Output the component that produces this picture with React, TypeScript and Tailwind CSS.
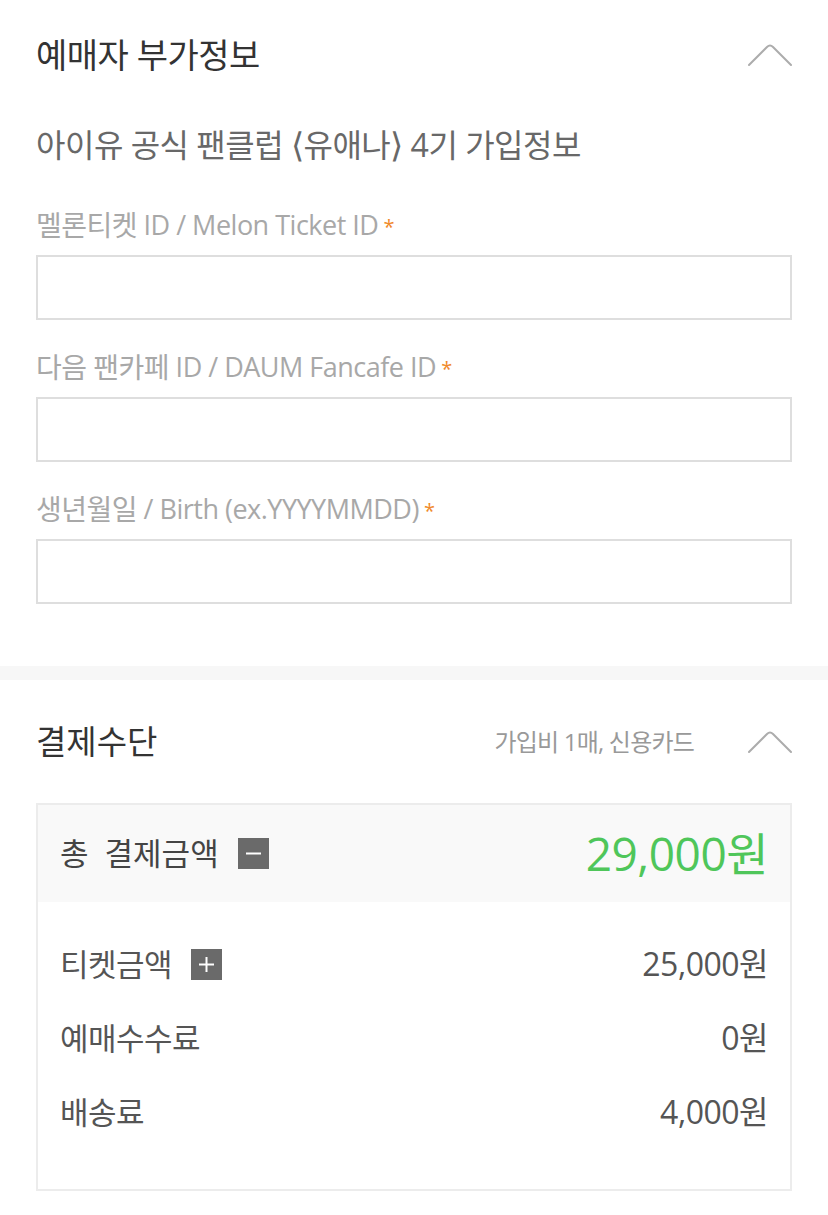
import React from "react";

const font = { fontFamily: '"Open Sans", "Noto Sans CJK KR", sans-serif' };

const ChevronUp = () => (
  <svg width="44" height="26" viewBox="0 0 44 26" fill="none" className="shrink-0">
    <path
      d="M1 23 L19 5 Q22 2 25 5 L43 23"
      stroke="#acacac"
      strokeWidth="2"
      strokeLinecap="round"
      strokeLinejoin="round"
    />
  </svg>
);

const Field = ({ ko, en }: { ko: string; en: string }) => (
  <div className="flex flex-col">
    <div className="h-[50px] flex items-center text-[#a8a8a8]">
      <span className="text-[28px] tracking-[-0.5px]">{ko}</span>
      <span className="text-[27px] tracking-[-0.5px] whitespace-pre">{" " + en}</span>
      <span className="text-[20px] text-[#f0892a] ml-[5px] mt-[4px]">*</span>
    </div>
    <input
      type="text"
      className="mt-[5px] h-[65px] w-full border-2 border-[#dedede] bg-white outline-none"
    />
  </div>
);

const SquareIcon = ({ kind }: { kind: "minus" | "plus" }) => (
  <span className="w-[31px] h-[31px] bg-[#6a6a6a] flex items-center justify-center">
    <svg width="17" height="17" viewBox="0 0 17 17">
      <path d="M1 8.5 H16" stroke="#fff" strokeWidth="2" />
      {kind === "plus" && <path d="M8.5 1 V16" stroke="#fff" strokeWidth="2" />}
    </svg>
  </span>
);

const PriceRow = ({
  label,
  value,
  plus,
}: {
  label: string;
  value: string;
  plus?: boolean;
}) => (
  <div className="h-[74px] flex items-center justify-between text-[#555]">
    <div className="flex items-center gap-x-[19px]">
      <span className="text-[31px] tracking-[-0.5px]">{label}</span>
      {plus && <SquareIcon kind="plus" />}
    </div>
    <span className="text-[32px] tracking-[-0.5px]">{value}</span>
  </div>
);

const bracket = { fontFamily: '"DejaVu Sans", sans-serif' };

export default function App() {
  return (
    <div className="w-[828px] min-h-[1215px] bg-white" style={font}>
      <section className="px-[36px] pb-[62px]">
        <div className="h-[110px] flex items-center justify-between">
          <h2 className="text-[34px] text-[#333] tracking-[-0.5px]">예매자 부가정보</h2>
          <ChevronUp />
        </div>
        <div className="h-[70px] flex items-center text-[32px] text-[#686868] tracking-[-0.5px]">
          <span>
            아이유 공식 팬클럽 <span style={bracket} className="text-[34px] font-light">⟨</span>유애나
            <span style={bracket} className="text-[34px] font-light">⟩</span> 4기 가입정보
          </span>
        </div>
        <div className="pt-[20px] flex flex-col gap-y-[22px]">
          <Field ko="멜론티켓" en="ID / Melon Ticket ID" />
          <Field ko="다음 팬카페" en="ID / DAUM Fancafe ID" />
          <Field ko="생년월일" en="/ Birth (ex.YYYYMMDD)" />
        </div>
      </section>

      <div className="h-[14px] bg-[#f7f7f7]" />

      <section className="px-[36px] pb-[26px]">
        <div className="h-[123px] flex items-center justify-between">
          <h2 className="text-[33px] text-[#333]">결제수단</h2>
          <div className="flex items-center gap-x-[54px]">
            <span className="text-[24px] text-[#999] tracking-[-0.8px]">가입비 1매, 신용카드</span>
            <ChevronUp />
          </div>
        </div>
        <div className="border-2 border-[#ececec]">
          <div className="h-[97px] bg-[#f9f9f9] px-[22px] flex items-center justify-between">
            <div className="flex items-center gap-x-[19px] text-[31px] text-[#444]">
              <span className="[word-spacing:8px]">총 결제금액</span>
              <SquareIcon kind="minus" />
            </div>
            <span className="text-[46px] text-[#4fc65a] tracking-[-0.5px]">29,000원</span>
          </div>
          <div className="px-[22px] pt-[25px] pb-[40px]">
            <PriceRow label="티켓금액" value="25,000원" plus />
            <PriceRow label="예매수수료" value="0원" />
            <PriceRow label="배송료" value="4,000원" />
          </div>
        </div>
      </section>
    </div>
  );
}
